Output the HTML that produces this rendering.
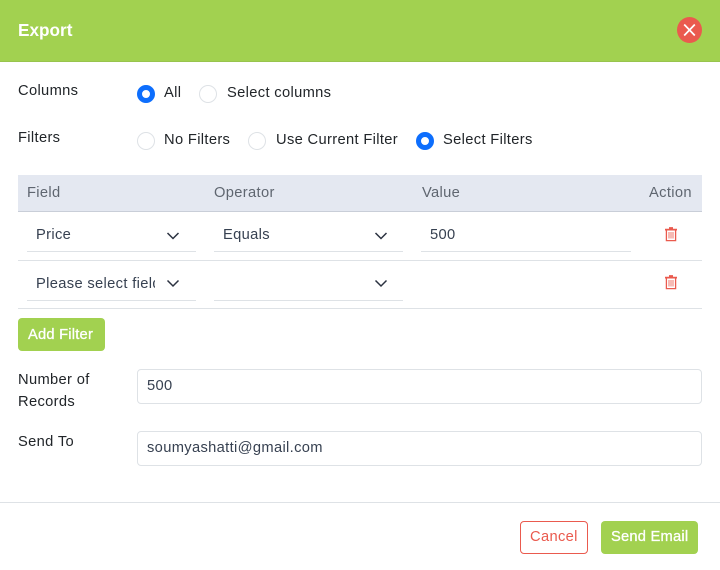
<!DOCTYPE html>
<html>
<head>
<meta charset="utf-8">
<style>
html,body{margin:0;padding:0;width:720px;height:570px;overflow:hidden;background:#fff}
body{position:relative;font-family:"Liberation Sans",sans-serif;font-size:14.7px;color:#212529}
.a{position:absolute;box-sizing:border-box}
.t{position:absolute;white-space:nowrap;line-height:22px;height:22px;letter-spacing:.34px;margin-top:1px}
.w{color:#fff;-webkit-text-stroke:.3px #fff;letter-spacing:.22px}
.r{position:absolute;box-sizing:border-box;width:18px;height:18px;border-radius:50%;border:1px solid #dee2e6;background:#fff}
.r.on{border:5px solid #0d6efd}
.l{position:absolute;height:1px;background:#dee2e6}
.in{position:absolute;box-sizing:border-box;left:137px;width:565px;height:35px;border:1px solid #dee2e6;border-radius:4px;background:#fff}
svg{position:absolute;display:block}
</style>
</head>
<body>
<div class="a" style="left:0;top:0;width:720px;height:62px;background:#a2d150;border-bottom:1px solid #98c44e"></div>
<div class="t" style="left:18px;top:18px;color:#fff;font-size:17.2px;font-weight:bold;letter-spacing:0">Export</div>
<div class="a" style="left:677px;top:17px;width:25px;height:26px;border-radius:50%;background:#ea5a4e"></div>
<svg style="left:677px;top:17px" width="25" height="26" viewBox="0 0 25 26"><path d="M7.2 7.5 L17.8 18.5 M17.8 7.5 L7.2 18.5" stroke="#fff" stroke-width="1.7" fill="none"/></svg>

<div class="t" style="left:18px;top:79px">Columns</div>
<div class="r on" style="left:137px;top:85px"></div>
<div class="t" style="left:164px;top:81px">All</div>
<div class="r" style="left:199px;top:85px"></div>
<div class="t" style="left:227px;top:81px">Select columns</div>

<div class="t" style="left:18px;top:126px">Filters</div>
<div class="r" style="left:137px;top:132px"></div>
<div class="t" style="left:164px;top:128px">No Filters</div>
<div class="r" style="left:248px;top:132px"></div>
<div class="t" style="left:276px;top:128px">Use Current Filter</div>
<div class="r on" style="left:416px;top:132px"></div>
<div class="t" style="left:443px;top:128px">Select Filters</div>

<div class="a" style="left:18px;top:175px;width:684px;height:37px;background:#e4e8f1;border-bottom:1px solid #c9ced8"></div>
<div class="t" style="left:27px;top:181px;color:#5f6670">Field</div>
<div class="t" style="left:214px;top:181px;color:#5f6670">Operator</div>
<div class="t" style="left:422px;top:181px;color:#5f6670">Value</div>
<div class="t" style="left:649px;top:181px;color:#5f6670">Action</div>

<div class="t" style="left:36px;top:223px;color:#374151">Price</div>
<div class="l" style="left:27px;top:251px;width:169px"></div>
<svg style="left:165px;top:228px" width="16" height="16" viewBox="0 0 16 16"><path d="M2.5 5 L8 10.5 L13.5 5" stroke="#2b3240" stroke-width="1.5" fill="none"/></svg>
<div class="t" style="left:223px;top:223px;color:#374151">Equals</div>
<div class="l" style="left:214px;top:251px;width:189px"></div>
<svg style="left:373px;top:228px" width="16" height="16" viewBox="0 0 16 16"><path d="M2.5 5 L8 10.5 L13.5 5" stroke="#2b3240" stroke-width="1.5" fill="none"/></svg>
<div class="t" style="left:430px;top:223px;color:#374151">500</div>
<div class="l" style="left:421px;top:251px;width:210px"></div>
<svg style="left:663px;top:226px" width="16" height="16" viewBox="0 0 16 16"><path d="M2 3.6 H14 M6 2 H10" stroke="#ea5a4e" stroke-width="1.7" fill="none"/><path d="M3.4 4 V14.6 H12.6 V4" stroke="#ea5a4e" stroke-width="1.3" fill="none"/><path d="M6 6 V12.5 M8 6 V12.5 M10 6 V12.5" stroke="#f0948c" stroke-width="1.3" fill="none"/></svg>
<div class="l" style="left:18px;top:260px;width:684px"></div>

<div class="t" style="left:36px;top:272px;width:119px;overflow:hidden;color:#374151">Please select field</div>
<div class="l" style="left:27px;top:300px;width:169px"></div>
<svg style="left:165px;top:275px" width="16" height="16" viewBox="0 0 16 16"><path d="M2.5 5.5 L8 11 L13.5 5.5" stroke="#2b3240" stroke-width="1.5" fill="none"/></svg>
<div class="l" style="left:214px;top:300px;width:189px"></div>
<svg style="left:373px;top:275px" width="16" height="16" viewBox="0 0 16 16"><path d="M2.5 5.5 L8 11 L13.5 5.5" stroke="#2b3240" stroke-width="1.5" fill="none"/></svg>
<svg style="left:663px;top:274px" width="16" height="16" viewBox="0 0 16 16"><path d="M2 3.6 H14 M6 2 H10" stroke="#ea5a4e" stroke-width="1.7" fill="none"/><path d="M3.4 4 V14.6 H12.6 V4" stroke="#ea5a4e" stroke-width="1.3" fill="none"/><path d="M6 6 V12.5 M8 6 V12.5 M10 6 V12.5" stroke="#f0948c" stroke-width="1.3" fill="none"/></svg>
<div class="l" style="left:18px;top:308px;width:684px"></div>

<div class="a" style="left:18px;top:318px;width:87px;height:33px;background:#a2d150;border-radius:4px"></div>
<div class="t w" style="left:28px;top:323px">Add Filter</div>

<div class="t" style="left:18px;top:368px">Number of</div>
<div class="t" style="left:18px;top:390px">Records</div>
<div class="in" style="top:369px"></div>
<div class="t" style="left:147px;top:374px;color:#374151">500</div>

<div class="t" style="left:18px;top:430px">Send To</div>
<div class="in" style="top:431px"></div>
<div class="t" style="left:147px;top:436px;color:#374151">soumyashatti@gmail.com</div>

<div class="l" style="left:0;top:502px;width:720px"></div>
<div class="a" style="left:520px;top:521px;width:68px;height:33px;border:1px solid #ea5a4e;border-radius:4px;background:#fff"></div>
<div class="t" style="left:530px;top:525px;color:#ea5a4e">Cancel</div>
<div class="a" style="left:601px;top:521px;width:97px;height:33px;background:#a2d150;border-radius:4px"></div>
<div class="t w" style="left:611px;top:525px">Send Email</div>
</body>
</html>
